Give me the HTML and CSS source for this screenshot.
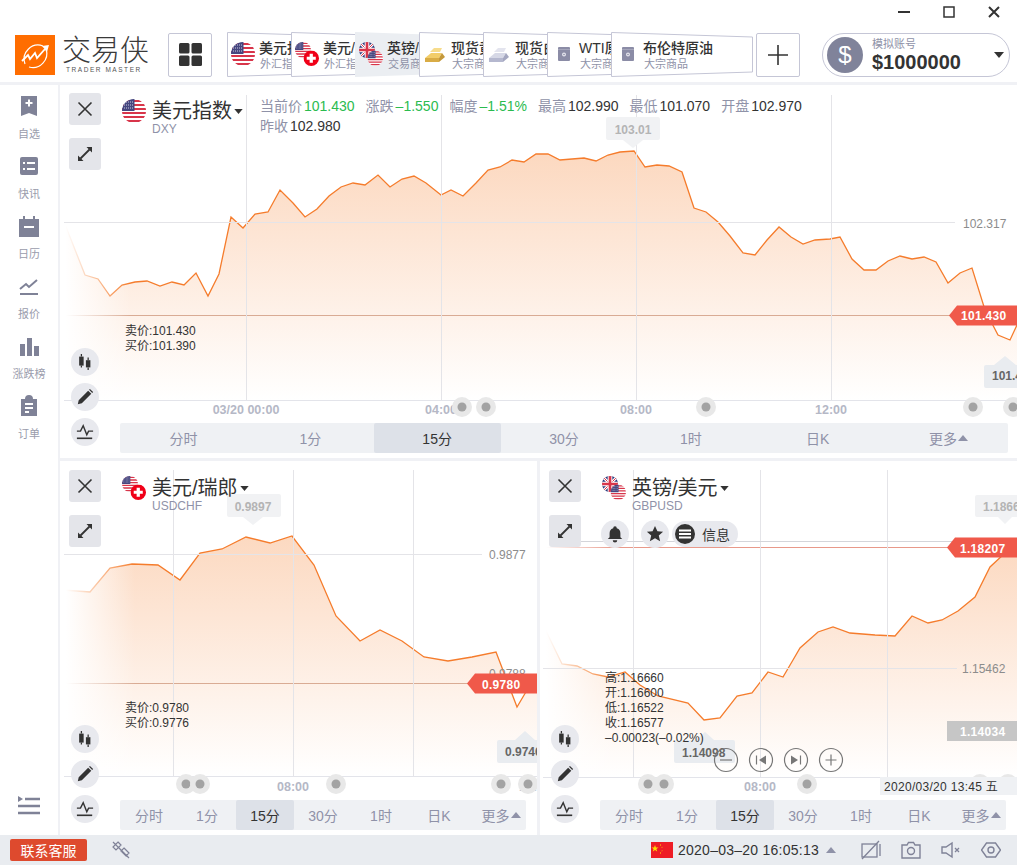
FILE: index.html
```html
<!DOCTYPE html>
<html lang="zh-CN">
<head>
    <meta charset="UTF-8">
    <meta name="viewport" content="width=device-width, initial-scale=1.0">
    <title>交易侠</title>
    <link rel="stylesheet" href="styles.css">
</head>
<body>
    <svg class="sprites" aria-hidden="true">
        <defs>
            <clipPath id="round"><circle cx="12" cy="12" r="12"/></clipPath>
            <symbol id="flag-us" viewBox="0 0 24 24">
                <g clip-path="url(#round)">
                    <rect width="24" height="24" fill="#fff"/>
                    <path d="M0 1h24v2H0zM0 5h24v2H0zM0 9h24v2H0zM0 13h24v2H0zM0 17h24v2H0zM0 21h24v2H0z" fill="#d8354a"/>
                    <rect width="12.500" height="12" fill="#46467f"/>
                    <path d="M2 3h9M2 6h9M2 9h9" stroke="#c9cbe0" stroke-width="1" stroke-dasharray="1 1"/>
                </g>
            </symbol>
            <symbol id="flag-ch" viewBox="0 0 24 24">
                <circle cx="12" cy="12" r="12" fill="#f00018"/>
                <path d="M9.500 5h5v4.500H19v5h-4.500V19h-5v-4.500H5v-5h4.500z" fill="#fff"/>
            </symbol>
            <symbol id="flag-uk" viewBox="0 0 24 24">
                <g clip-path="url(#round)">
                    <rect width="24" height="24" fill="#2b3a7c"/>
                    <path d="M0 0l24 24M24 0L0 24" stroke="#fff" stroke-width="4"/>
                    <path d="M0 0l24 24M24 0L0 24" stroke="#d8354a" stroke-width="1.500"/>
                    <path d="M12 0v24M0 12h24" stroke="#fff" stroke-width="7"/>
                    <path d="M12 0v24M0 12h24" stroke="#d8354a" stroke-width="4"/>
                </g>
            </symbol>
            <symbol id="pair-usdchf" viewBox="0 0 24 24">
                <use href="#flag-us" width="16" height="16"/>
                <use href="#flag-ch" x="8.500" y="8.500" width="15.500" height="15.500"/>
            </symbol>
            <symbol id="pair-gbpusd" viewBox="0 0 24 24">
                <use href="#flag-uk" width="16" height="16"/>
                <use href="#flag-us" x="8.500" y="8.500" width="15.500" height="15.500"/>
            </symbol>
            <symbol id="bars-gold" viewBox="0 0 24 24">
                <path d="M2 16l6-5h11l-3 5z" fill="#f2cd69"/>
                <path d="M2 16h14v4H2z" fill="#d9ac45"/>
                <path d="M16 16l3-5 3 4-6 5z" fill="#c4983a"/>
                <path d="M7 10l4-4h8l-2 4z" fill="#f7dc8c"/>
            </symbol>
            <symbol id="bars-silver" viewBox="0 0 24 24">
                <path d="M2 16l6-5h11l-3 5z" fill="#d6d8e6"/>
                <path d="M2 16h14v4H2z" fill="#b5b8cf"/>
                <path d="M16 16l3-5 3 4-6 5z" fill="#a4a7c0"/>
                <path d="M7 10l4-4h8l-2 4z" fill="#e3e4ee"/>
            </symbol>
            <symbol id="oil-can" viewBox="0 0 12 14">
                <rect width="12" height="14" rx="1" fill="#8b8ca6"/>
                <rect y="2" width="12" height="1" fill="#a5a6bb"/>
                <circle cx="6" cy="7.500" r="2" fill="#e5e5ee"/>
                <circle cx="6" cy="7.500" r="0.800" fill="#8b8ca6"/>
            </symbol>
            <symbol id="i-close" viewBox="0 0 16 16">
                <path d="M1.500 1.500l13 13M14.500 1.500l-13 13" fill="none" stroke="#333" stroke-width="1.600"/>
            </symbol>
            <symbol id="i-expand" viewBox="0 0 16 16">
                <path d="M3.500 12.500l9-9" stroke="#333" stroke-width="1.800"/>
                <path d="M9.500 1h5.500v5.500zM1 9.500V15h5.500z" fill="#333"/>
            </symbol>
            <symbol id="i-candle" viewBox="0 0 20 20">
                <path d="M6 1v3M6 14v2M13.500 5v3M13.500 16v3" stroke="#333" stroke-width="1.400"/>
                <rect x="3.500" y="4" width="5" height="10" fill="#333"/>
                <rect x="11" y="8" width="5" height="8" fill="#333"/>
            </symbol>
            <symbol id="i-pen" viewBox="0 0 20 20">
                <path d="M2 18l1-4.500L13.500 3l3.500 3.500L6.500 17zM14.500 2l1-1 3.500 3.500-1 1z" fill="#333"/>
            </symbol>
            <symbol id="i-line" viewBox="0 0 20 20">
                <path d="M1 9l4 0 3-6 4 10 2-4 5 0" fill="none" stroke="#333" stroke-width="1.600"/>
                <path d="M1 17h17" stroke="#333" stroke-width="1.800"/>
            </symbol>
            <symbol id="i-caret" viewBox="0 0 10 6">
                <path d="M0 0h10L5 6z" fill="#333"/>
            </symbol>
        </defs>
    </svg>

    <div class="app">
        <header class="header">
            <div class="titlebar">
                <svg class="win-icon" viewBox="0 0 12 12"><path d="M0 6h12" stroke="#333" stroke-width="2"/></svg>
                <svg class="win-icon" viewBox="0 0 12 12"><rect x="1" y="1" width="10" height="10" fill="none" stroke="#333" stroke-width="1.500"/></svg>
                <svg class="win-icon" viewBox="0 0 12 12"><path d="M1 1l10 10M11 1L1 11" stroke="#333" stroke-width="2"/></svg>
            </div>
            <div class="toolbar">
                <div class="logo">
                    <svg class="logo-mark" viewBox="0 0 40 40">
                        <rect width="40" height="40" fill="#ff6d00"/>
                        <path d="M10 29a14 14 0 0 1 18-18M31 14a14 14 0 0 1-17 18" fill="none" stroke="#fff" stroke-width="1.200"/>
                        <path d="M7 26l6-6 2 4 5-6 2 5 8-9" fill="none" stroke="#fff" stroke-width="1.800"/>
                        <path d="M27 11l7-1-2 7z" fill="#fff"/>
                    </svg>
                    <div class="logo-text">
                        <div class="logo-name">交易侠</div>
                        <div class="logo-en">TRADER MASTER</div>
                    </div>
                </div>
                <button class="grid-button">
                    <svg viewBox="0 0 23 23"><rect width="10.500" height="10.500" rx="1.500"/><rect x="12.500" width="10.500" height="10.500" rx="1.500"/><rect y="12.500" width="10.500" height="10.500" rx="1.500"/><rect x="12.500" y="12.500" width="10.500" height="10.500" rx="1.500"/></svg>
                </button>
                <div class="tabs">
                    <div class="tab">
                        <svg class="tab-shape" viewBox="0 0 142 45"><polygon points="0.500,0.500 141.500,5 141.500,40 0.500,44.500"/></svg>
                        <svg class="tab-icon"><use href="#flag-us"/></svg>
                        <div class="tab-text"><div class="tab-name">美元指数</div><div class="tab-sub">外汇指数</div></div>
                    </div>
                    <div class="tab">
                        <svg class="tab-shape" viewBox="0 0 142 45"><polygon points="0.500,0.500 141.500,5 141.500,40 0.500,44.500"/></svg>
                        <svg class="tab-icon"><use href="#pair-usdchf"/></svg>
                        <div class="tab-text"><div class="tab-name">美元/瑞郎</div><div class="tab-sub">外汇指数</div></div>
                    </div>
                    <div class="tab tab-active">
                        <svg class="tab-shape" viewBox="0 0 142 45"><polygon points="0,0 142,5 142,40 0,45"/></svg>
                        <svg class="tab-icon"><use href="#pair-gbpusd"/></svg>
                        <div class="tab-text"><div class="tab-name">英镑/美元</div><div class="tab-sub">交易商品</div></div>
                    </div>
                    <div class="tab">
                        <svg class="tab-shape" viewBox="0 0 142 45"><polygon points="0.500,0.500 141.500,5 141.500,40 0.500,44.500"/></svg>
                        <svg class="tab-icon"><use href="#bars-gold"/></svg>
                        <div class="tab-text"><div class="tab-name">现货黄金</div><div class="tab-sub">大宗商品</div></div>
                    </div>
                    <div class="tab">
                        <svg class="tab-shape" viewBox="0 0 142 45"><polygon points="0.500,0.500 141.500,5 141.500,40 0.500,44.500"/></svg>
                        <svg class="tab-icon"><use href="#bars-silver"/></svg>
                        <div class="tab-text"><div class="tab-name">现货白银</div><div class="tab-sub">大宗商品</div></div>
                    </div>
                    <div class="tab">
                        <svg class="tab-shape" viewBox="0 0 142 45"><polygon points="0.500,0.500 141.500,5 141.500,40 0.500,44.500"/></svg>
                        <svg class="tab-icon tab-icon-can"><use href="#oil-can"/></svg>
                        <div class="tab-text"><div class="tab-name">WTI原油</div><div class="tab-sub">大宗商品</div></div>
                    </div>
                    <div class="tab">
                        <svg class="tab-shape" viewBox="0 0 142 45"><polygon points="0.500,0.500 141.500,5 141.500,40 0.500,44.500"/></svg>
                        <svg class="tab-icon tab-icon-can"><use href="#oil-can"/></svg>
                        <div class="tab-text"><div class="tab-name">布伦特原油</div><div class="tab-sub">大宗商品</div></div>
                    </div>
                </div>
                <button class="plus-button">
                    <svg viewBox="0 0 20 20"><path d="M10 0v20M0 10h20" stroke="#333" stroke-width="1.600"/></svg>
                </button>
                <div class="account">
                    <div class="account-icon">$</div>
                    <div class="account-text">
                        <div class="account-label">模拟账号</div>
                        <div class="account-value">$1000000</div>
                    </div>
                    <svg class="account-caret"><use href="#i-caret"/></svg>
                </div>
            </div>
        </header>

        <div class="body">
            <nav class="sidebar">
                <div class="side-item">
                    <svg class="side-icon" viewBox="0 0 22 22"><path d="M3 1h16v20l-8-3-8 3z" fill="#7f8297"/><path d="M11 4.500v7M7.500 8h7" stroke="#fff" stroke-width="2"/></svg>
                    <span>自选</span>
                </div>
                <div class="side-item">
                    <svg class="side-icon" viewBox="0 0 22 22"><rect x="2" y="2" width="18" height="18" rx="2" fill="#7f8297"/><path d="M5 8h2M9 8h8M5 14h2M9 14h8" stroke="#fff" stroke-width="2"/></svg>
                    <span>快讯</span>
                </div>
                <div class="side-item">
                    <svg class="side-icon" viewBox="0 0 22 22"><path d="M1 4h20v18H1z" fill="#7f8297"/><path d="M6 1v5M16 1v5" stroke="#7f8297" stroke-width="2"/><path d="M6 12h10" stroke="#fff" stroke-width="2"/></svg>
                    <span>日历</span>
                </div>
                <div class="side-item">
                    <svg class="side-icon" viewBox="0 0 22 22"><path d="M2 14l6-5 3 3 8-7" fill="none" stroke="#7f8297" stroke-width="2"/><path d="M2 19h18" stroke="#7f8297" stroke-width="2"/></svg>
                    <span>报价</span>
                </div>
                <div class="side-item">
                    <svg class="side-icon" viewBox="0 0 22 22"><path d="M2 9h5v12H2zM9 3h5v18H9zM16 11h5v10h-5z" fill="#7f8297"/></svg>
                    <span>涨跌榜</span>
                </div>
                <div class="side-item">
                    <svg class="side-icon" viewBox="0 0 22 22"><path d="M3 4h4a4 4 0 0 1 8 0h4v17H3z" fill="#7f8297"/><path d="M7 9h8M7 13h8M7 17h4" stroke="#fff" stroke-width="1.800"/></svg>
                    <span>订单</span>
                </div>
                <svg class="side-menu" viewBox="0 0 24 20"><path d="M1 1l5 3-5 3z" fill="#7f8297"/><path d="M8 4h15M1 11h22M1 18h22" stroke="#7f8297" stroke-width="2.400"/></svg>
            </nav>

            <main class="charts">
                <section class="panel panel-wide">
                    <svg class="chart" viewBox="60 85 957 373">
                        <defs>
                            <linearGradient id="fill-a" gradientUnits="userSpaceOnUse" x1="0" y1="150" x2="0" y2="400">
                                <stop offset="0" stop-color="#fcd8bf"/>
                                <stop offset="1" stop-color="#fff"/>
                            </linearGradient>
                            <linearGradient id="fade" x1="0" y1="0" x2="1" y2="0">
                                <stop offset="0.080" stop-color="#fff"/>
                                <stop offset="1" stop-color="#fff" stop-opacity="0"/>
                            </linearGradient>
                        </defs>
                        <polygon fill="url(#fill-a)" points="64,222 85,275 98,279 110,296 122,285 135,282 147,281 160,286 172,282 184,285 196,273 208,296 219,274 231,217 243,228 255,214 268,212 280,190 293,203 305,217 317,209 329,196 341,187 353,183 365,185 378,175 390,187 402,179 414,176 426,183 441,195 451,190 463,196 476,183 488,170 500,167 512,160 524,162 536,154 548,154 560,160 572,159 584,158 596,161 608,155 620,152 634,151 645,167 657,165 669,166 682,172 694,208 706,212 718,222 730,236 743,253 755,255 767,240 779,227 791,237 803,244 815,240 830,239 840,237 852,259 864,270 876,270 888,261 900,256 912,259 924,257 936,262 948,283 960,273 972,268 985,310 998,335 1010,340 1017,325 1017,400 64,400"/>
                        <polyline class="price-line" points="64,222 85,275 98,279 110,296 122,285 135,282 147,281 160,286 172,282 184,285 196,273 208,296 219,274 231,217 243,228 255,214 268,212 280,190 293,203 305,217 317,209 329,196 341,187 353,183 365,185 378,175 390,187 402,179 414,176 426,183 441,195 451,190 463,196 476,183 488,170 500,167 512,160 524,162 536,154 548,154 560,160 572,159 584,158 596,161 608,155 620,152 634,151 645,167 657,165 669,166 682,172 694,208 706,212 718,222 730,236 743,253 755,255 767,240 779,227 791,237 803,244 815,240 830,239 840,237 852,259 864,270 876,270 888,261 900,256 912,259 924,257 936,262 948,283 960,273 972,268 985,310 998,335 1010,340 1017,325"/>
                        <path class="last-line" d="M60 315.500H950"/>
                        <rect x="60" y="85" width="70" height="320" fill="url(#fade)"/>
                        <path class="grid-line" d="M246.500 95V400M441.500 95V400M636.500 95V400M831.500 95V400M64 222.500H955"/>
                        <path class="axis-line" d="M64 400.500H1017"/>
                        <text class="axis-price" x="963" y="228">102.317</text>
                        <text class="axis-time" x="246" y="414" text-anchor="middle">03/20 00:00</text>
                        <text class="axis-time" x="441" y="414" text-anchor="middle">04:00</text>
                        <text class="axis-time" x="636" y="414" text-anchor="middle">08:00</text>
                        <text class="axis-time" x="831" y="414" text-anchor="middle">12:00</text>
                        <g class="dot"><circle cx="462" cy="407" r="10"/><circle class="dot-in" cx="462" cy="407" r="4.500"/></g>
                        <g class="dot"><circle cx="486" cy="407" r="10"/><circle class="dot-in" cx="486" cy="407" r="4.500"/></g>
                        <g class="dot"><circle cx="706" cy="407" r="10"/><circle class="dot-in" cx="706" cy="407" r="4.500"/></g>
                        <g class="dot"><circle cx="973" cy="407" r="10"/><circle class="dot-in" cx="973" cy="407" r="4.500"/></g>
                        <g class="dot"><circle cx="1013" cy="407" r="10"/><circle class="dot-in" cx="1013" cy="407" r="4.500"/></g>
                        <path class="tag" d="M949 315.500l8-10h60v20h-60z"/>
                        <text class="tag-text" x="961" y="320">101.430</text>
                        <path class="tip" d="M608 117h50a2 2 0 0 1 2 2v19a2 2 0 0 1-2 2h-15l-10 8-10-8h-15a2 2 0 0 1-2-2v-19a2 2 0 0 1 2-2z"/>
                        <text class="tip-text" x="633" y="134" text-anchor="middle">103.01</text>
                        <path class="tip tip-dark" d="M986 365h8l11-9 11 9h10v23h-40a2 2 0 0 1-2-2v-19a2 2 0 0 1 2-2z"/>
                        <text class="tip-text tip-text-dark" x="992" y="380">101.430</text>
                        <text class="note" x="125" y="335">卖价:101.430</text>
                        <text class="note" x="125" y="350">买价:101.390</text>
                    </svg>
                    <div class="panel-side">
                        <button class="square-btn"><svg><use href="#i-close"/></svg></button>
                        <button class="square-btn square-btn-small"><svg><use href="#i-expand"/></svg></button>
                        <div class="round-group">
                            <button class="round-btn"><svg><use href="#i-candle"/></svg></button>
                            <button class="round-btn"><svg><use href="#i-pen"/></svg></button>
                            <button class="round-btn"><svg><use href="#i-line"/></svg></button>
                        </div>
                    </div>
                    <div class="panel-main">
                        <div class="chart-head">
                            <svg class="chart-flag"><use href="#flag-us"/></svg>
                            <div class="chart-title">
                                <div class="chart-name">美元指数<svg class="name-caret"><use href="#i-caret"/></svg></div>
                                <div class="chart-code">DXY</div>
                            </div>
                            <div class="quote">
                                <span class="quote-item">当前价<b class="up">101.430</b></span>
                                <span class="quote-item">涨跌<b class="up">–1.550</b></span>
                                <span class="quote-item">幅度<b class="up">–1.51%</b></span>
                                <span class="quote-item">最高<b>102.990</b></span>
                                <span class="quote-item">最低<b>101.070</b></span>
                                <span class="quote-item">开盘<b>102.970</b></span>
                                <span class="quote-item">昨收<b>102.980</b></span>
                            </div>
                        </div>
                        <div class="periods">
                            <span>分时</span><span>1分</span><span class="period-on">15分</span><span>30分</span><span>1时</span><span>日K</span><span>更多<i class="up-caret"></i></span>
                        </div>
                    </div>
                </section>

                <section class="panel">
                    <svg class="chart" viewBox="60 461 477 374">
                        <defs>
                            <linearGradient id="fill-b" gradientUnits="userSpaceOnUse" x1="0" y1="530" x2="0" y2="776">
                                <stop offset="0" stop-color="#fcd8bf"/>
                                <stop offset="1" stop-color="#fff"/>
                            </linearGradient>
                        </defs>
                        <polygon fill="url(#fill-b)" points="62,590 90,592 110,568 132,564 158,565 180,580 200,553 222,549 246,537 270,543 292,536 314,565 336,616 360,641 380,630 402,641 424,657 448,661 472,657 496,652 517,707 530,685 537,685 537,776 62,776"/>
                        <polyline class="price-line" points="62,590 90,592 110,568 132,564 158,565 180,580 200,553 222,549 246,537 270,543 292,536 314,565 336,616 360,641 380,630 402,641 424,657 448,661 472,657 496,652 517,707 530,685"/>
                        <path class="last-line" d="M60 683.500H470"/>
                        <rect x="60" y="461" width="75" height="320" fill="url(#fade)"/>
                        <path class="grid-line" d="M173.500 470V776M293.500 470V776M413.500 470V776M64 554.500H482"/>
                        <path class="axis-line" d="M64 776.500H537"/>
                        <text class="axis-price" x="489" y="559">0.9877</text>
                        <text class="axis-price" x="489" y="678">0.9788</text>
                        <text class="axis-time" x="293" y="791" text-anchor="middle">08:00</text>
                        <text class="axis-time" x="519" y="791">16:00</text>
                        <g class="dot"><circle cx="186" cy="784" r="10"/><circle class="dot-in" cx="186" cy="784" r="4.500"/></g>
                        <g class="dot"><circle cx="200" cy="784" r="10"/><circle class="dot-in" cx="200" cy="784" r="4.500"/></g>
                        <g class="dot"><circle cx="336" cy="784" r="10"/><circle class="dot-in" cx="336" cy="784" r="4.500"/></g>
                        <g class="dot"><circle cx="501" cy="784" r="10"/><circle class="dot-in" cx="501" cy="784" r="4.500"/></g>
                        <g class="dot"><circle cx="528" cy="784" r="10"/><circle class="dot-in" cx="528" cy="784" r="4.500"/></g>
                        <path class="tag" d="M467 683.500l8-10h62v20h-62z"/>
                        <text class="tag-text" x="482" y="688.500">0.9780</text>
                        <path class="tip" d="M229 494h50a2 2 0 0 1 2 2v19a2 2 0 0 1-2 2h-16l-10 8-10-8h-14a2 2 0 0 1-2-2v-19a2 2 0 0 1 2-2z"/>
                        <text class="tip-text" x="253" y="511" text-anchor="middle">0.9897</text>
                        <path class="tip tip-dark" d="M499 740h16l10-9 10 9h10v23h-46a2 2 0 0 1-2-2v-19a2 2 0 0 1 2-2z"/>
                        <text class="tip-text tip-text-dark" x="505" y="756">0.9746</text>
                        <text class="note" x="125" y="712">卖价:0.9780</text>
                        <text class="note" x="125" y="727">买价:0.9776</text>
                    </svg>
                    <div class="panel-side">
                        <button class="square-btn"><svg><use href="#i-close"/></svg></button>
                        <button class="square-btn square-btn-small"><svg><use href="#i-expand"/></svg></button>
                        <div class="round-group">
                            <button class="round-btn"><svg><use href="#i-candle"/></svg></button>
                            <button class="round-btn"><svg><use href="#i-pen"/></svg></button>
                            <button class="round-btn"><svg><use href="#i-line"/></svg></button>
                        </div>
                    </div>
                    <div class="panel-main">
                        <div class="chart-head">
                            <svg class="chart-flag"><use href="#pair-usdchf"/></svg>
                            <div class="chart-title">
                                <div class="chart-name">美元/瑞郎<svg class="name-caret"><use href="#i-caret"/></svg></div>
                                <div class="chart-code">USDCHF</div>
                            </div>
                        </div>
                        <div class="periods">
                            <span>分时</span><span>1分</span><span class="period-on">15分</span><span>30分</span><span>1时</span><span>日K</span><span>更多<i class="up-caret"></i></span>
                        </div>
                    </div>
                </section>

                <section class="panel">
                    <svg class="chart" viewBox="540 461 477 374">
                        <defs>
                            <linearGradient id="fill-c" gradientUnits="userSpaceOnUse" x1="0" y1="540" x2="0" y2="777">
                                <stop offset="0" stop-color="#fcd8bf"/>
                                <stop offset="1" stop-color="#fff"/>
                            </linearGradient>
                        </defs>
                        <polygon fill="url(#fill-c)" points="543,625 562,664 577,666 593,674 608,677 625,672 640,685 658,696 688,703 704,720 720,718 737,696 752,693 768,672 783,677 793,660 800,648 818,632 833,627 850,633 875,635 895,636 912,616 928,623 942,620 958,611 975,597 990,567 1005,553 1017,545 1017,777 543,777"/>
                        <polyline class="price-line" points="543,625 562,664 577,666 593,674 608,677 625,672 640,685 658,696 688,703 704,720 720,718 737,696 752,693 768,672 783,677 793,660 800,648 818,632 833,627 850,633 875,635 895,636 912,616 928,623 942,620 958,611 975,597 990,567 1005,553 1017,545"/>
                        <path class="last-line last-line-strong" d="M540 547.500H950"/>
                        <rect x="540" y="461" width="75" height="320" fill="url(#fade)"/>
                        <path class="grid-line" d="M633.500 470V777M760.500 470V777M887.500 470V777M543 668.500H957"/>
                        <path class="axis-line" d="M543 777.500H1017"/>
                        <path class="cross-line" d="M549 541.500H1017"/>
                        <text class="axis-price" x="962" y="673">1.15462</text>
                        <text class="axis-time" x="760" y="791" text-anchor="middle">08:00</text>
                        <g class="dot"><circle cx="648" cy="784" r="10"/><circle class="dot-in" cx="648" cy="784" r="4.500"/></g>
                        <g class="dot"><circle cx="664" cy="784" r="10"/><circle class="dot-in" cx="664" cy="784" r="4.500"/></g>
                        <g class="dot"><circle cx="807" cy="784" r="10"/><circle class="dot-in" cx="807" cy="784" r="4.500"/></g>
                        <g class="dot"><circle cx="980" cy="784" r="10"/><circle class="dot-in" cx="980" cy="784" r="4.500"/></g>
                        <g class="dot"><circle cx="1008" cy="784" r="10"/><circle class="dot-in" cx="1008" cy="784" r="4.500"/></g>
                        <path class="tag" d="M947 547.500l8-10h62v20h-62z"/>
                        <text class="tag-text" x="960" y="552.500">1.18207</text>
                        <rect class="tag-cross" x="947" y="721" width="70" height="20"/>
                        <text class="tag-text" x="960" y="736">1.14034</text>
                        <path class="tip" d="M977 495h45v22h-10l-7 7-7-7h-21a2 2 0 0 1-2-2v-18a2 2 0 0 1 2-2z"/>
                        <text class="tip-text" x="983" y="511">1.18660</text>
                        <path class="tip tip-dark" d="M676 740h20l9-8 9 8h19a2 2 0 0 1 2 2v19a2 2 0 0 1-2 2h-57a2 2 0 0 1-2-2v-19a2 2 0 0 1 2-2z"/>
                        <text class="tip-text tip-text-dark" x="682" y="757">1.14098</text>
                        <text class="note" x="605" y="682">高:1.16660</text>
                        <text class="note" x="605" y="697">开:1.16600</text>
                        <text class="note" x="605" y="712">低:1.16522</text>
                        <text class="note" x="605" y="727">收:1.16577</text>
                        <text class="note" x="605" y="742">–0.00023(–0.02%)</text>
                        <g class="zoom-btn">
                            <circle cx="726" cy="760" r="11.500"/><path d="M720 760h12"/>
                            <circle cx="761" cy="760" r="11.500"/><path d="M756.500 755.500v9"/><path class="zoom-solid" d="M766 755.500v9l-7-4.500z"/>
                            <circle cx="796" cy="760" r="11.500"/><path d="M800.500 755.500v9"/><path class="zoom-solid" d="M791 755.500v9l7-4.500z"/>
                            <circle cx="831" cy="760" r="11.500"/><path d="M825.500 760h11M831 754.500v11"/>
                        </g>
                        <rect class="date-box" x="880" y="777" width="137" height="18"/>
                        <text class="date-text" x="884" y="791">2020/03/20 13:45 五</text>
                    </svg>
                    <div class="panel-side">
                        <button class="square-btn"><svg><use href="#i-close"/></svg></button>
                        <button class="square-btn square-btn-small"><svg><use href="#i-expand"/></svg></button>
                        <div class="round-group">
                            <button class="round-btn"><svg><use href="#i-candle"/></svg></button>
                            <button class="round-btn"><svg><use href="#i-pen"/></svg></button>
                            <button class="round-btn"><svg><use href="#i-line"/></svg></button>
                        </div>
                    </div>
                    <div class="panel-main">
                        <div class="chart-head">
                            <svg class="chart-flag"><use href="#pair-gbpusd"/></svg>
                            <div class="chart-title">
                                <div class="chart-name">英镑/美元<svg class="name-caret"><use href="#i-caret"/></svg></div>
                                <div class="chart-code">GBPUSD</div>
                            </div>
                        </div>
                        <div class="chart-actions">
                            <button class="round-btn">
                                <svg viewBox="0 0 20 20"><path d="M10 1.500a2 2 0 0 1 2 2c3 1 4 3 4 6v4l2 2H2l2-2v-4c0-3 1-5 4-6a2 2 0 0 1 2-2zM7.500 17h5a2.500 2.500 0 0 1-5 0z" fill="#333"/></svg>
                            </button>
                            <button class="round-btn">
                                <svg viewBox="0 0 20 20"><path d="M10 1l2.700 6 6.300.6-4.800 4.200 1.500 6.200L10 14.700 4.300 18l1.500-6.200L1 7.600 7.300 7z" fill="#333"/></svg>
                            </button>
                            <div class="info-pill">
                                <svg viewBox="0 0 20 20"><circle cx="10" cy="10" r="10" fill="#333"/><path d="M4 6.500h12M4 10h12M4 13.500h12" stroke="#fff" stroke-width="1.800"/></svg>
                                <span>信息</span>
                            </div>
                        </div>
                        <div class="periods">
                            <span>分时</span><span>1分</span><span class="period-on">15分</span><span>30分</span><span>1时</span><span>日K</span><span>更多<i class="up-caret"></i></span>
                        </div>
                    </div>
                </section>
            </main>
        </div>

        <footer class="statusbar">
            <button class="service-btn">联系客服</button>
            <svg class="status-link" viewBox="0 0 20 20"><path d="M2 2l4 4M18 18l-4-4M7 2l3 3-5 5-3-3zM13 8l5 5-3 3-5-5z" fill="none" stroke="#7f8297" stroke-width="1.200"/><path d="M6 6l8 8" stroke="#7f8297" stroke-width="1.200"/></svg>
            <div class="status-right">
                <svg class="cn-flag" viewBox="0 0 22 16"><rect width="22" height="16" fill="#ee1c25"/><path d="M4 3l.9 2.500 2.600 0-2.100 1.600.8 2.500L4 8.100 1.800 9.600l.8-2.500L.5 5.500l2.600 0z" fill="#ffde00"/><path d="M9 2l1 1-1 1zM11 4.500l.5 1-1 .5zM11 8l.5 1-1 .5zM9 10l1 1-1 1z" fill="#ffde00"/></svg>
                <span class="status-time">2020–03–20 16:05:13</span>
                <i class="up-caret up-caret-gray"></i>
                <div class="status-icons">
                    <svg viewBox="0 0 20 20"><rect x="1" y="4" width="15" height="13" fill="none" stroke="#7f8297" stroke-width="1.300"/><path d="M19 4v12M1 19L18 1" stroke="#7f8297" stroke-width="1.300"/></svg>
                    <svg viewBox="0 0 20 20"><path d="M1 5h5l1.500-2.500h5L14 5h5v13H1z" fill="none" stroke="#7f8297" stroke-width="1.400"/><circle cx="10" cy="11" r="3.500" fill="none" stroke="#7f8297" stroke-width="1.400"/></svg>
                    <svg viewBox="0 0 20 20"><path d="M1 7h4l6-4v14l-6-4H1z" fill="none" stroke="#7f8297" stroke-width="1.400"/><path d="M14 8l4 4M18 8l-4 4" stroke="#7f8297" stroke-width="1.300"/></svg>
                    <svg viewBox="0 0 20 20"><path d="M5.500 3h9l5 7-5 7h-9l-5-7z" fill="none" stroke="#7f8297" stroke-width="1.400"/><circle cx="10" cy="10" r="3" fill="none" stroke="#7f8297" stroke-width="1.400"/></svg>
                </div>
            </div>
        </footer>
    </div>
</body>
</html>
```

FILE: styles.css
```css
* {
    box-sizing: border-box;
}

html, body {
    margin: 0;
    height: 100%;
}

body {
    font-family: "Liberation Sans", "Noto Sans CJK SC", sans-serif;
    color: #333;
    background: #f0f1f5;
    overflow: hidden;
}

button {
    font-family: inherit;
    border: none;
    padding: 0;
    cursor: pointer;
}

.sprites {
    position: absolute;
    width: 0;
    height: 0;
}

.app {
    height: 865px;
    display: flex;
    flex-direction: column;
}

/* header */
.header {
    height: 82px;
    margin-bottom: 3px;
    background: #fff;
}

.titlebar {
    height: 32px;
    padding: 6px 17px 0 0;
    display: flex;
    justify-content: flex-end;
    gap: 33px;
}

.win-icon {
    width: 12px;
    height: 12px;
}

.toolbar {
    height: 45px;
    padding-left: 15px;
    display: flex;
    align-items: center;
}

.logo {
    display: flex;
    align-items: center;
    gap: 7px;
    width: 133px;
}

.logo-mark {
    width: 40px;
    height: 40px;
    flex: none;
}

.logo-name {
    font-size: 29px;
    line-height: 30px;
    font-weight: 300;
    color: #3a3a3a;
    white-space: nowrap;
}

.logo-en {
    font-size: 6.500px;
    letter-spacing: 1.550px;
    color: #555;
    padding-left: 4px;
    white-space: nowrap;
}

.grid-button,
.plus-button {
    width: 44px;
    height: 44px;
    border: 1px solid #c5c6d6;
    border-radius: 2px;
    background: #fff;
    display: flex;
    align-items: center;
    justify-content: center;
    flex: none;
}

.grid-button {
    margin: 0 15px 0 20px;
}

.grid-button svg {
    width: 23px;
    height: 23px;
    fill: #333;
}

.plus-button {
    margin-left: 4px;
}

.plus-button svg {
    width: 20px;
    height: 20px;
}

.tabs {
    display: flex;
    width: 525px;
    flex: none;
}

.tab {
    position: relative;
    width: 142px;
    height: 45px;
    margin-right: -78px;
    flex: none;
}

.tab-shape {
    position: absolute;
    left: 0;
    top: 0;
    width: 142px;
    height: 45px;
    fill: #fff;
    stroke: #c5c6d6;
}

.tab-active .tab-shape {
    fill: #ebeef2;
    stroke: none;
}

.tab-icon {
    position: absolute;
    left: 4px;
    top: 10px;
    width: 24px;
    height: 24px;
}

.tab-icon-can {
    left: 11px;
    top: 15px;
    width: 12px;
    height: 14px;
}

.tab-text {
    position: relative;
    padding: 7px 0 0 32px;
    white-space: nowrap;
}

.tab-name {
    font-size: 14px;
    line-height: 18px;
    font-weight: 500;
    color: #333;
}

.tab-sub {
    font-size: 11px;
    line-height: 15px;
    padding-left: 1px;
    color: #8f92a8;
}

.account {
    width: 188px;
    height: 44px;
    margin-left: 22px;
    border: 1px solid #c5c6d6;
    border-radius: 22px;
    padding-left: 4px;
    display: flex;
    align-items: center;
    position: relative;
    flex: none;
}

.account-icon {
    width: 36px;
    height: 36px;
    border-radius: 50%;
    background: #80839a;
    color: #fff;
    font-size: 24px;
    line-height: 36px;
    text-align: center;
    flex: none;
}

.account-text {
    margin-left: 9px;
}

.account-label {
    font-size: 11px;
    line-height: 14px;
    color: #8f92a8;
}

.account-value {
    font-size: 20px;
    line-height: 22px;
    font-weight: bold;
    color: #333;
}

.account-caret {
    position: absolute;
    right: 5px;
    top: 18px;
    width: 10px;
    height: 6px;
}

/* sidebar and charts */
.body {
    flex: 1;
    display: flex;
    gap: 2px;
    min-height: 0;
}

.sidebar {
    width: 58px;
    background: #fff;
    padding-top: 10px;
    display: flex;
    flex-direction: column;
    align-items: center;
}

.side-item {
    height: 60px;
    display: flex;
    flex-direction: column;
    align-items: center;
    gap: 10px;
    font-size: 11px;
    line-height: 14px;
    color: #9a9cac;
}

.side-icon {
    width: 22px;
    height: 22px;
}

.side-menu {
    width: 24px;
    height: 20px;
    margin-top: auto;
    margin-bottom: 20px;
}

.charts {
    flex: 1;
    display: grid;
    grid-template-columns: 477px 477px;
    grid-template-rows: 373px 374px;
    column-gap: 3px;
    row-gap: 3px;
}

.panel {
    position: relative;
    background: #fff;
    overflow: hidden;
    padding: 9px 11px 5px 9px;
    display: flex;
    gap: 19px;
}

.panel-wide {
    grid-column: 1 / 3;
    padding: 8px 9px 5px 9px;
}

.chart {
    position: absolute;
    left: 0;
    top: 0;
    width: 100%;
    height: 100%;
}

.price-line {
    fill: none;
    stroke: #f57c2c;
    stroke-width: 1.300;
}

.grid-line {
    fill: none;
    stroke: #e4e4e8;
    stroke-width: 1;
}

.axis-line {
    fill: none;
    stroke: #e3e4ea;
}

.cross-line {
    fill: none;
    stroke: #d4d5da;
}

.last-line {
    fill: none;
    stroke: #d9ab94;
}

.last-line-strong {
    stroke: #e8998a;
}

.axis-price {
    font-size: 12px;
    fill: #8c8c8c;
}

.axis-time {
    font-size: 12.500px;
    font-weight: bold;
    fill: #b5b8c6;
}

.dot circle {
    fill: #e8e8e8;
}

.dot .dot-in {
    fill: #a3a3a3;
}

.tag {
    fill: #f0594a;
}

.tag-cross {
    fill: #c6c6c6;
}

.tag-text {
    font-size: 12px;
    font-weight: bold;
    fill: #fff;
    letter-spacing: 0.300px;
}

.tip {
    fill: #f1f2f4;
}

.tip-dark {
    fill: #e9ecf0;
}

.tip-text {
    font-size: 12px;
    font-weight: bold;
    fill: #b4b4b4;
}

.tip-text-dark {
    fill: #666;
}

.note {
    font-size: 12px;
    fill: #333;
}

.zoom-btn circle,
.zoom-btn path {
    fill: none;
    stroke: #777;
    stroke-width: 1.200;
}

.zoom-btn .zoom-solid {
    fill: #777;
    stroke: none;
}

.date-box {
    fill: #eff1f4;
}

.date-text {
    font-size: 12px;
    fill: #333;
    letter-spacing: 0.300px;
}

.panel-side {
    position: relative;
    width: 32px;
    flex: none;
    display: flex;
    flex-direction: column;
    gap: 13px;
}

.square-btn {
    width: 32px;
    height: 32px;
    border-radius: 3px;
    background: #e4e5ea;
    display: flex;
    align-items: center;
    justify-content: center;
}

.square-btn svg {
    width: 16px;
    height: 16px;
}

.round-group {
    margin-top: auto;
    margin-bottom: 7px;
    padding-left: 2px;
    display: flex;
    flex-direction: column;
    gap: 7px;
}

.round-btn {
    width: 28px;
    height: 28px;
    border-radius: 50%;
    background: #e8e9ee;
    display: flex;
    align-items: center;
    justify-content: center;
    flex: none;
}

.round-btn svg {
    width: 18px;
    height: 18px;
}

.panel-main {
    position: relative;
    flex: 1;
    min-width: 0;
    display: flex;
    flex-direction: column;
}

.chart-head {
    display: flex;
    padding: 6px 0 0 2px;
}

.chart-flag {
    width: 24px;
    height: 24px;
    flex: none;
    margin-right: 6px;
}

.chart-title {
    flex: none;
}

.chart-name {
    font-size: 20px;
    line-height: 24px;
    color: #333;
    white-space: nowrap;
    display: flex;
    align-items: center;
}

.name-caret {
    width: 9px;
    height: 5px;
    margin-left: 2px;
}

.chart-code {
    font-size: 12px;
    line-height: 12px;
    color: #8f92a8;
}

.quote {
    width: 560px;
    margin: -3px 0 0 17px;
    display: flex;
    flex-wrap: wrap;
    column-gap: 11px;
    font-size: 14px;
    line-height: 20px;
    color: #8f92a8;
}

.quote-item b {
    font-weight: normal;
    margin-left: 2px;
    color: #333;
}

.quote-item .up {
    color: #2bbb4f;
}

.chart-actions {
    margin: 8px 0 0 1px;
    display: flex;
    align-items: center;
    gap: 12px;
}

.info-pill {
    height: 26px;
    margin-left: -9px;
    padding: 0 8px 0 3px;
    border-radius: 13px;
    background: #e8e9ee;
    display: flex;
    align-items: center;
    gap: 7px;
    font-size: 14px;
}

.info-pill svg {
    width: 20px;
    height: 20px;
}

.periods {
    margin-top: auto;
    height: 30px;
    border-radius: 2px;
    background: #eff1f4;
    display: flex;
    font-size: 14px;
    color: #8f92a8;
}

.periods span {
    flex: 1;
    border-radius: 2px;
    display: flex;
    align-items: center;
    justify-content: center;
}

.periods span:last-child::before {
    content: "";
    width: 8px;
}

.periods .period-on {
    background: #dde1e8;
    color: #333;
}

.up-caret {
    display: inline-block;
    width: 0;
    height: 0;
    margin-left: 1px;
    border-left: 5px solid transparent;
    border-right: 5px solid transparent;
    border-bottom: 6px solid #8f92a8;
}

/* status bar */
.statusbar {
    height: 30px;
    background: #e9ecf0;
    padding: 0 16px 0 10px;
    display: flex;
    align-items: center;
}

.service-btn {
    width: 77px;
    height: 22px;
    border-radius: 2px;
    background: #de4a2e;
    color: #fff;
    font-size: 14px;
}

.status-link {
    width: 20px;
    height: 20px;
    margin-left: 24px;
}

.status-right {
    margin-left: auto;
    display: flex;
    align-items: center;
}

.cn-flag {
    width: 22px;
    height: 16px;
}

.status-time {
    margin-left: 5px;
    font-size: 14px;
    letter-spacing: 0.250px;
    color: #333;
}

.up-caret-gray {
    margin: 0 25px 0 7px;
}

.status-icons {
    display: flex;
    gap: 20px;
}

.status-icons svg {
    width: 20px;
    height: 20px;
}
```
